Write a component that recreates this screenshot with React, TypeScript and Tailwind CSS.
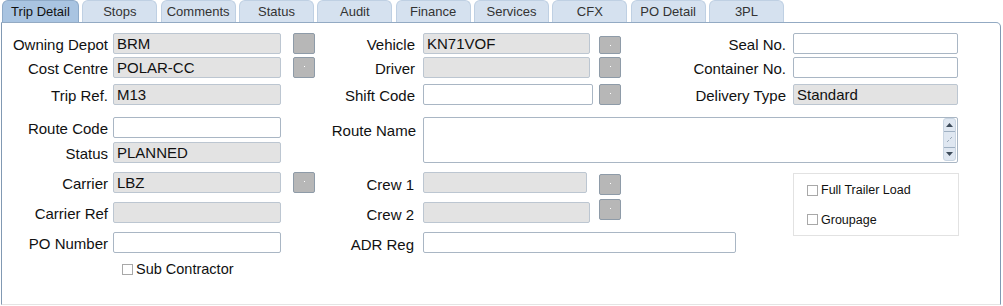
import React from "react";

const TABS = ["Trip Detail", "Stops", "Comments", "Status", "Audit", "Finance", "Services", "CFX", "PO Detail", "3PL"];

function Box({ w, value, grey, h = 21 }: { w: number; value?: string; grey?: boolean; h?: number }) {
  return (
    <div
      style={{ width: w, height: h }}
      className={
        "shrink-0 rounded-[2px] border pl-[3px] text-[15px] leading-[19px] text-[#111] " +
        (grey ? "bg-[#e3e3e3] border-[#bcc6d1]" : "bg-white border-[#a9b6c4]")
      }
    >
      {value}
    </div>
  );
}

function Btn({ dot = true, className = "", h = 21 }: { dot?: boolean; className?: string; h?: number }) {
  return (
    <div
      style={{ height: h }}
      className={"relative w-[22px] shrink-0 rounded-[2px] border border-[#8e9ba8] bg-[#b7b7b7] " + className}
    >
      {dot && <div className="absolute left-[10px] top-[8px] h-[1px] w-[1px] bg-white" />}
    </div>
  );
}

function Check({ label, size }: { label: string; size: string }) {
  return (
    <div className="flex items-center">
      <div className="h-[11px] w-[11px] shrink-0 border border-[#a8a8a8] bg-white" />
      <span className={"ml-[3px] whitespace-nowrap leading-none text-[#111] " + size}>{label}</span>
    </div>
  );
}

export default function App() {
  return (
    <div className="h-[306px] w-[1003px] overflow-hidden bg-white font-['Liberation_Sans',Arial,sans-serif] text-[#111]">
      {/* Tabs */}
      <div className="flex h-[22px] items-end pl-[2px]">
        {TABS.map((t, i) => (
          <div
            key={t}
            style={{ width: i === 0 ? 77 : 75, marginLeft: i === 0 ? 0 : 3.33 }}
            className={
              "flex h-[22px] items-center justify-center rounded-t-[6px] border border-b-0 text-[13px] " +
              (i === 0
                ? "border-[#8eaac8] bg-[#a9c4e1] text-[#111]"
                : "border-[#bfd0e3] bg-[#d5e1ef] text-[#333]")
            }
          >
            {t}
          </div>
        ))}
      </div>

      {/* Panel */}
      <div className="ml-[1px] flex h-[283px] w-[1000px] rounded-tr-[5px] border border-t-[#93aac3] border-l-[#8199b3] border-r-[#8199b3] border-b-[#e4e4e4]">
        {/* Left column */}
        <div className="flex w-[318px] shrink-0 flex-col pt-[10px]">
          {[
            { l: "Owning Depot", v: "BRM", g: true, b: "nodot", mt: 0 },
            { l: "Cost Centre", v: "POLAR-CC", g: true, b: "dot", mt: 3 },
            { l: "Trip Ref.", v: "M13", g: true, b: "", mt: 6 },
            { l: "Route Code", v: "", g: false, b: "", mt: 12 },
            { l: "Status", v: "PLANNED", g: true, b: "", mt: 4 },
            { l: "Carrier", v: "LBZ", g: true, b: "dot", mt: 9 },
            { l: "Carrier Ref", v: "", g: true, b: "", mt: 9 },
            { l: "PO Number", v: "", g: false, b: "", mt: 9 },
          ].map((r) => (
            <div key={r.l} style={{ marginTop: r.mt }} className="flex h-[21px] items-center">
              <span className="mt-[1px] w-[106px] shrink-0 whitespace-nowrap text-right text-[15px] leading-none">{r.l}</span>
              <div className="ml-[5px]">
                <Box w={168} value={r.v} grey={r.g} />
              </div>
              {r.b && <Btn dot={r.b === "dot"} className="ml-[12px]" />}
            </div>
          ))}
          <div className="ml-[120px] mt-[9px]">
            <Check label="Sub Contractor" size="text-[14.5px]" />
          </div>
        </div>

        {/* Right area */}
        <div className="flex flex-col pt-[10px]">
          {/* Rows 1-3 */}
          {[
            { l: "Vehicle", v: "KN71VOF", g: true, w: 167, bm: 3, bh: 18, r: "Seal No.", rv: "", rg: false, mt: 0 },
            { l: "Driver", v: "", g: true, w: 167, bm: 0, bh: 21, r: "Container No.", rv: "", rg: false, mt: 3 },
            { l: "Shift Code", v: "", g: false, w: 170, bm: 0, bh: 21, r: "Delivery Type", rv: "Standard", rg: true, mt: 6 },
          ].map((r) => (
            <div key={r.l} style={{ marginTop: r.mt }} className="flex h-[21px] items-start">
              <span className="mt-[4px] w-[95px] shrink-0 whitespace-nowrap text-right text-[15px] leading-none">{r.l}</span>
              <div className="ml-[8px] w-[176px] shrink-0">
                <Box w={r.w} value={r.v} grey={r.g} />
              </div>
              <div style={{ marginTop: r.bm }}>
                <Btn h={r.bh} />
              </div>
              <span className="mt-[4px] w-[165px] shrink-0 whitespace-nowrap text-right text-[15px] leading-none">{r.r}</span>
              <div className="ml-[7px]">
                <Box w={165} value={r.rv} grey={r.rg} />
              </div>
            </div>
          ))}

          {/* Route Name */}
          <div className="mt-[12px] flex items-start">
            <span className="mt-[6px] w-[96px] shrink-0 whitespace-nowrap text-right text-[15px] leading-none">Route Name</span>
            <div className="ml-[7px] flex h-[46px] w-[535px] shrink-0 justify-end rounded-[2px] border border-[#a9b6c4] bg-white pr-[1px]">
              <div className="flex h-[43px] w-[13px] flex-col items-center rounded-[3px] border border-[#c9d5e2] bg-[#dfe7f1]">
                <div className="flex h-[13px] w-full items-center justify-center border-b border-[#9fb0c2]">
                  <svg width="7" height="4" viewBox="0 0 7 4">
                    <polygon points="0,4 7,4 3.5,0" fill="#3d4b5a" />
                  </svg>
                </div>
                <div className="flex w-full flex-1 items-center justify-center">
                  <svg width="7" height="7" viewBox="0 0 7 7">
                    <line x1="1" y1="6" x2="3" y2="4" stroke="#9aa9b8" strokeWidth="1" />
                    <line x1="4" y1="3" x2="6" y2="1" stroke="#9aa9b8" strokeWidth="1" />
                  </svg>
                </div>
                <div className="flex h-[13px] w-full items-center justify-center border-t border-[#9fb0c2]">
                  <svg width="7" height="4" viewBox="0 0 7 4">
                    <polygon points="0,0 7,0 3.5,4" fill="#3d4b5a" />
                  </svg>
                </div>
              </div>
            </div>
          </div>

          {/* Crew rows + group box */}
          <div className="mt-[9px] flex items-start">
            <div className="flex w-[301px] shrink-0 flex-col">
              {[
                { l: "Crew 1", w: 164, btn: true, bm: 2, g: true, mt: 0 },
                { l: "Crew 2", w: 167, btn: true, bm: -3, g: true, mt: 9 },
                { l: "ADR Reg", w: 313, btn: false, bm: 0, g: false, mt: 9 },
              ].map((r) => (
                <div key={r.l} style={{ marginTop: r.mt }} className="flex h-[21px] items-start">
                  <span className="mt-[5px] w-[94px] shrink-0 whitespace-nowrap text-right text-[15px] leading-none">{r.l}</span>
                  <div className={"ml-[9px] shrink-0 " + (r.btn ? "w-[176px]" : "")}>
                    <Box w={r.w} grey={r.g} />
                  </div>
                  {r.btn && (
                    <div style={{ marginTop: r.bm }}>
                      <Btn />
                    </div>
                  )}
                </div>
              ))}
            </div>
            <div className="ml-[172px] mt-[1px] flex h-[63px] w-[166px] shrink-0 flex-col gap-[17px] border border-[#e2e2e2] pl-[13px] pt-[10px]">
              <Check label="Full Trailer Load" size="text-[12.5px]" />
              <Check label="Groupage" size="text-[12.5px]" />
            </div>
          </div>
        </div>
      </div>
    </div>
  );
}
